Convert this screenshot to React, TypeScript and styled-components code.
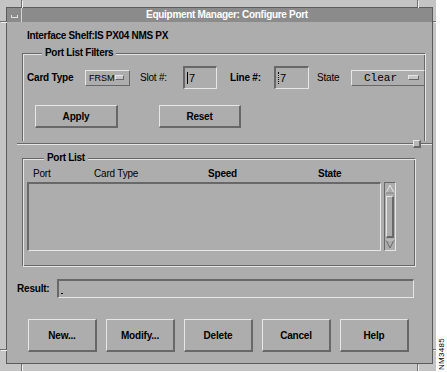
import React from "react";
import styled, { createGlobalStyle } from "styled-components";

const GlobalStyle = createGlobalStyle`
  html, body {
    margin: 0;
    padding: 0;
    background: #ffffff;
  }
  body {
    font-family: "Liberation Sans", Arial, sans-serif;
    font-size: 10px;
    color: #000;
  }
`;

const GRAY = "#adadad";
const DARK = "#686868";
const LIGHT = "#e6e6e6";

const Page = styled.div`
  display: flex;
  width: 447px;
  height: 372px;
  overflow: hidden;
`;

const Frame = styled.div`
  position: relative;
  box-sizing: border-box;
  width: 436px;
  height: 371px;
  padding: 7px 3px 7px 6px;
  background: #c4c4c4;
  display: flex;
`;

const Tick = styled.span<{ $x: number; $y: number; $w: number; $h: number }>`
  position: absolute;
  left: ${(p) => p.$x}px;
  top: ${(p) => p.$y}px;
  width: ${(p) => p.$w}px;
  height: ${(p) => p.$h}px;
  background: #707070;
  box-shadow: 1px 1px 0 #f0f0f0;
`;

const Window = styled.div`
  flex: 1;
  display: flex;
  flex-direction: column;
  border: 1px solid #5c5c5c;
`;

const TitleBar = styled.div`
  display: flex;
  height: 14px;
  background: #8b8b8b;
  flex: none;
`;

const MenuButton = styled.div`
  box-sizing: border-box;
  width: 15px;
  height: 14px;
  border-right: 1px solid #d4d4d4;
  display: flex;
  align-items: center;
  justify-content: center;
  &::after {
    content: "";
    width: 5px;
    height: 2px;
    margin-top: 3px;
    border: 1px solid #e4e4e4;
    border-top: none;
  }
`;

const Title = styled.div`
  flex: 1;
  color: #ffffff;
  font-weight: bold;
  font-size: 10px;
  line-height: 14px;
  text-align: center;
  letter-spacing: -0.3px;
`;

const Client = styled.div`
  flex: 1;
  display: flex;
  flex-direction: column;
  background: ${GRAY};
`;

const InterfaceText = styled.div`
  margin: 8px 0 0 20px;
  line-height: 12px;
  font-weight: bold;
  letter-spacing: -0.3px;
`;

const GroupBox = styled.div<{ $w: number; $h: number; $open?: boolean; $mt: number }>`
  position: relative;
  box-sizing: border-box;
  width: ${(p) => p.$w}px;
  height: ${(p) => p.$h}px;
  margin: ${(p) => p.$mt}px 0 0 15px;
  border: 1px solid;
  border-color: ${DARK} ${LIGHT} ${LIGHT} ${DARK};
  border-bottom-style: ${(p) => (p.$open ? "none" : "solid")};
  box-shadow: ${(p) =>
    p.$open
      ? `inset 1px 1px 0 ${LIGHT}, inset -1px 0 0 ${DARK}`
      : `inset 1px 1px 0 ${LIGHT}, inset -1px -1px 0 ${DARK}`};
  display: flex;
  flex-direction: column;
`;

const Legend = styled.span<{ $left: number }>`
  position: absolute;
  top: -7px;
  left: ${(p) => p.$left}px;
  padding: 0 3px;
  background: ${GRAY};
  line-height: 12px;
  font-weight: bold;
  letter-spacing: -0.3px;
`;

const FilterRow = styled.div`
  display: flex;
  align-items: center;
  height: 23px;
  margin: 12px 0 0 4px;
`;

const Label = styled.span<{ $w: number; $ml?: number; $bold?: boolean }>`
  flex: none;
  width: ${(p) => p.$w}px;
  margin-left: ${(p) => p.$ml ?? 0}px;
  font-weight: ${(p) => (p.$bold ? "bold" : "normal")};
  letter-spacing: -0.2px;
  white-space: nowrap;
`;

const OptionMenu = styled.div<{ $w: number; $mono?: boolean }>`
  flex: none;
  box-sizing: border-box;
  width: ${(p) => p.$w}px;
  height: 16px;
  display: flex;
  align-items: center;
  justify-content: space-between;
  padding: 0 5px 0 ${(p) => (p.$mono ? 12 : 3)}px;
  border: 1px solid;
  border-color: ${LIGHT} ${DARK} ${DARK} ${LIGHT};
  font-family: ${(p) =>
    p.$mono ? `"Liberation Mono", "Courier New", monospace` : `"Liberation Sans", Arial, sans-serif`};
  font-size: ${(p) => (p.$mono ? 11 : 9)}px;
`;

const Indicator = styled.span`
  box-sizing: border-box;
  width: 11px;
  height: 5px;
  border: 1px solid;
  border-color: ${LIGHT} ${DARK} ${DARK} ${LIGHT};
  background: #c6c6c6;
`;

const TextField = styled.div<{ $w: number }>`
  flex: none;
  box-sizing: border-box;
  width: ${(p) => p.$w}px;
  height: 23px;
  display: flex;
  align-items: center;
  padding-left: 2px;
  border-style: solid;
  border-width: 2px 1px 1px 2px;
  border-color: ${DARK} ${LIGHT} ${LIGHT} ${DARK};
  font-size: 11px;
`;

const Caret = styled.span<{ $dotted?: boolean }>`
  width: 0;
  height: 12px;
  border-left: 1px ${(p) => (p.$dotted ? "dotted" : "solid")} #000;
  margin-right: 1px;
`;

const ActionRow = styled.div`
  display: flex;
  align-items: center;
  margin: 16px 0 0 12px;
`;

const PushButton = styled.button<{ $w: number; $h: number; $ml?: number }>`
  flex: none;
  box-sizing: border-box;
  width: ${(p) => p.$w}px;
  height: ${(p) => p.$h}px;
  margin-left: ${(p) => p.$ml ?? 0}px;
  padding: 0;
  border-style: solid;
  border-width: 1px 2px 2px 1px;
  border-color: ${LIGHT} ${DARK} ${DARK} ${LIGHT};
  background: ${GRAY};
  color: #000;
  font-family: "Liberation Sans", Arial, sans-serif;
  font-weight: bold;
  font-size: 10px;
  letter-spacing: -0.2px;
`;

const Sash = styled.div`
  position: relative;
  box-sizing: border-box;
  height: 2px;
  margin: 2px 0 0 10px;
  border-top: 1px solid ${DARK};
  border-bottom: 1px solid ${LIGHT};
`;

const SashHandle = styled.span`
  position: absolute;
  right: 11px;
  top: -4px;
  box-sizing: border-box;
  width: 8px;
  height: 8px;
  border-style: solid;
  border-width: 1px 2px 2px 1px;
  border-color: ${LIGHT} ${DARK} ${DARK} ${LIGHT};
  background: #b8b8b8;
`;

const HeaderRow = styled.div`
  display: grid;
  grid-template-columns: 61px 114px 110px 1fr;
  margin: 9px 0 0 10px;
  line-height: 12px;
  letter-spacing: -0.2px;
`;

const Header = styled.span<{ $bold?: boolean }>`
  font-weight: ${(p) => (p.$bold ? "bold" : "normal")};
`;

const ListRow = styled.div`
  display: flex;
  height: 69px;
  margin: 2px 0 0 4px;
`;

const ListBox = styled.div`
  box-sizing: border-box;
  width: 354px;
  height: 69px;
  border-style: solid;
  border-width: 2px 1px 1px 2px;
  border-color: ${DARK} ${LIGHT} ${LIGHT} ${DARK};
`;

const ScrollBar = styled.div`
  box-sizing: border-box;
  width: 12px;
  height: 69px;
  margin-left: 3px;
  border: 1px solid;
  border-color: ${DARK} ${LIGHT} ${LIGHT} ${DARK};
  display: flex;
  flex-direction: column;
  align-items: center;
`;

const Arrow = styled.svg`
  display: block;
  flex: none;
`;

const Slider = styled.div`
  box-sizing: border-box;
  flex: 1;
  width: 8px;
  margin: 1px 0;
  border-style: solid;
  border-width: 1px 2px 2px 1px;
  border-color: ${LIGHT} ${DARK} ${DARK} ${LIGHT};
`;

const ResultRow = styled.div`
  display: flex;
  align-items: center;
  margin: 12px 0 0 10px;
`;

const ResultField = styled.div`
  box-sizing: border-box;
  width: 357px;
  height: 19px;
  display: flex;
  align-items: flex-end;
  padding: 0 0 3px 2px;
  border-style: solid;
  border-width: 2px 1px 1px 2px;
  border-color: ${DARK} ${LIGHT} ${LIGHT} ${DARK};
`;

const Cursor = styled.span`
  width: 2px;
  height: 1px;
  background: #000;
`;

const ButtonRow = styled.div`
  display: flex;
  gap: 9px;
  margin: 21px 0 0 21px;
`;

const Strip = styled.div`
  box-sizing: border-box;
  width: 11px;
  height: 372px;
  background: #ffffff;
  display: flex;
  flex-direction: column;
  justify-content: flex-end;
  align-items: center;
  padding-bottom: 2px;
`;

const StripText = styled.span`
  writing-mode: vertical-rl;
  transform: rotate(180deg);
  font-size: 8px;
  line-height: 9px;
  letter-spacing: 0.3px;
`;

const ticks = [
  { x: 21, y: 0, w: 1, h: 7 },
  { x: 417, y: 0, w: 1, h: 7 },
  { x: 0, y: 21, w: 6, h: 1 },
  { x: 0, y: 349, w: 6, h: 1 },
  { x: 21, y: 364, w: 1, h: 7 },
  { x: 417, y: 364, w: 1, h: 7 },
  { x: 433, y: 21, w: 3, h: 1 },
  { x: 433, y: 349, w: 3, h: 1 },
];

const UpArrow = () => (
  <Arrow width="10" height="12" viewBox="0 0 10 12">
    <polygon points="5,2 9,10 1,10" fill="none" stroke={LIGHT} strokeWidth="1" />
    <line x1="9" y1="10" x2="1" y2="10" stroke={DARK} />
  </Arrow>
);

const DownArrow = () => (
  <Arrow width="10" height="11" viewBox="0 0 10 11">
    <polygon points="1,1 9,1 5,9" fill="none" stroke={DARK} strokeWidth="1" />
    <line x1="1" y1="1" x2="9" y2="1" stroke={LIGHT} />
  </Arrow>
);

const App = () => {
  const buttons = ["New...", "Modify...", "Delete", "Cancel", "Help"];
  return (
    <>
      <GlobalStyle />
      <Page>
        <Frame>
          {ticks.map((t, i) => (
            <Tick key={i} $x={t.x} $y={t.y} $w={t.w} $h={t.h} />
          ))}
          <Window>
            <TitleBar>
              <MenuButton />
              <Title>Equipment Manager: Configure Port</Title>
            </TitleBar>
            <Client>
              <InterfaceText>Interface Shelf:IS PX04 NMS PX</InterfaceText>

              <GroupBox $w={404} $h={88} $mt={11} $open>
                <Legend $left={19}>Port List Filters</Legend>
                <FilterRow>
                  <Label $w={58} $bold>
                    Card Type
                  </Label>
                  <OptionMenu $w={45}>
                    FRSM
                    <Indicator />
                  </OptionMenu>
                  <Label $w={43} $ml={10}>
                    Slot #:
                  </Label>
                  <TextField $w={34}>
                    <Caret />7
                  </TextField>
                  <Label $w={44} $ml={13} $bold>
                    Line #:
                  </Label>
                  <TextField $w={35}>
                    <Caret $dotted />7
                  </TextField>
                  <Label $w={34} $ml={8}>
                    State
                  </Label>
                  <OptionMenu $w={74} $mono>
                    Clear
                    <Indicator />
                  </OptionMenu>
                </FilterRow>
                <ActionRow>
                  <PushButton $w={83} $h={23}>
                    Apply
                  </PushButton>
                  <PushButton $w={82} $h={23} $ml={41}>
                    Reset
                  </PushButton>
                </ActionRow>
              </GroupBox>

              <Sash>
                <SashHandle />
              </Sash>

              <GroupBox $w={394} $h={109} $mt={13}>
                <Legend $left={21}>Port List</Legend>
                <HeaderRow>
                  <Header>Port</Header>
                  <Header>Card Type</Header>
                  <Header $bold>Speed</Header>
                  <Header $bold>State</Header>
                </HeaderRow>
                <ListRow>
                  <ListBox />
                  <ScrollBar>
                    <UpArrow />
                    <Slider />
                    <DownArrow />
                  </ScrollBar>
                </ListRow>
              </GroupBox>

              <ResultRow>
                <Label $w={40} $bold>
                  Result:
                </Label>
                <ResultField>
                  <Cursor />
                </ResultField>
              </ResultRow>

              <ButtonRow>
                {buttons.map((b) => (
                  <PushButton key={b} $w={69} $h={33}>
                    {b}
                  </PushButton>
                ))}
              </ButtonRow>
            </Client>
          </Window>
        </Frame>
        <Strip>
          <StripText>NM3485</StripText>
        </Strip>
      </Page>
    </>
  );
};

export default App;
